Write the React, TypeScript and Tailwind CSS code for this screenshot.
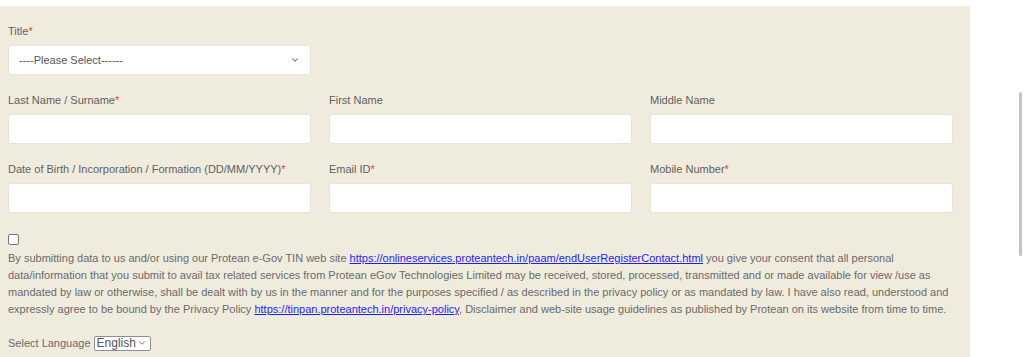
import { ChevronDown } from "lucide-react";

const font = { fontFamily: '"Liberation Sans", Arial, sans-serif' };

function Label({ text, required }: { text: string; required?: boolean }) {
  return (
    <label className="mb-[5px] block h-[17px] text-[11px] leading-[17px] text-[#5f5f5f]">
      {text}
      {required && <span className="text-[#e0452b]">*</span>}
    </label>
  );
}

function Field({ label, required }: { label: string; required?: boolean }) {
  return (
    <div>
      <Label text={label} required={required} />
      <input
        type="text"
        className="block h-[30px] w-[303px] rounded-[3px] border border-[#e6e4d8] bg-white px-2 text-[12px] outline-none"
      />
    </div>
  );
}

export default function App() {
  return (
    <div className="relative h-[357px] w-full overflow-hidden bg-white" style={font}>
      <main className="mt-[6px] h-[351px] w-[970px] bg-[#efecde] px-[8px] pt-[17px]">
        <div>
          <Label text="Title" required />
          <div className="flex h-[30px] w-[303px] items-center justify-between rounded-[3px] border border-[#e6e4d8] bg-white pl-[10px] pr-[10px] text-[11px] text-[#555]">
            <span>----Please Select------</span>
            <ChevronDown size={10} strokeWidth={2.5} className="text-[#666]" />
          </div>
        </div>

        <div className="mt-[17px] grid w-[945px] grid-cols-[303px_303px_303px] gap-x-[18px] gap-y-[17px]">
          <Field label="Last Name / Surname" required />
          <Field label="First Name" />
          <Field label="Middle Name" />
          <Field label="Date of Birth / Incorporation / Formation (DD/MM/YYYY)" required />
          <Field label="Email ID" required />
          <Field label="Mobile Number" required />
        </div>

        <div className="mt-[21px] w-[953px]">
          <input
            type="checkbox"
            className="m-0 block h-[11px] w-[11px] appearance-none rounded-[2px] border border-[#767676] bg-white"
          />
          <p className="mt-[5px] text-[11px] leading-[17px] text-[#6a6a6a]">
            By submitting data to us and/or using our Protean e-Gov TIN web site{" "}
            <a
              href="#"
              className="text-[#1d1dff] underline"
            >
              https://onlineservices.proteantech.in/paam/endUserRegisterContact.html
            </a>{" "}
            you give your consent that all personal data/information that you submit to avail tax
            related services from Protean eGov Technologies Limited may be received, stored,
            processed, transmitted and or made available for view /use as mandated by law or
            otherwise, shall be dealt with by us in the manner and for the purposes specified / as
            described in the privacy policy or as mandated by law. I have also read, understood and
            expressly agree to be bound by the Privacy Policy{" "}
            <a href="#" className="text-[#1d1dff] underline">
              https://tinpan.proteantech.in/privacy-policy
            </a>
            , Disclaimer and web-site usage guidelines as published by Protean on its website from
            time to time.
          </p>
        </div>

        <div className="mt-[17px] flex items-center gap-[3px] text-[11px] text-[#6a6a6a]">
          <span>Select Language</span>
          <div className="flex h-[15px] w-[57px] items-center justify-between rounded-[2px] border border-[#8f8f8f] bg-white pl-[2px] pr-[3px] text-[12px] leading-none text-[#555]">
            <span>English</span>
            <ChevronDown size={10} strokeWidth={2} className="text-[#555]" />
          </div>
        </div>
      </main>

      <div className="absolute right-[2px] top-[92px] h-[164px] w-[3px] rounded-full bg-[#c4c4c4]" />
    </div>
  );
}
